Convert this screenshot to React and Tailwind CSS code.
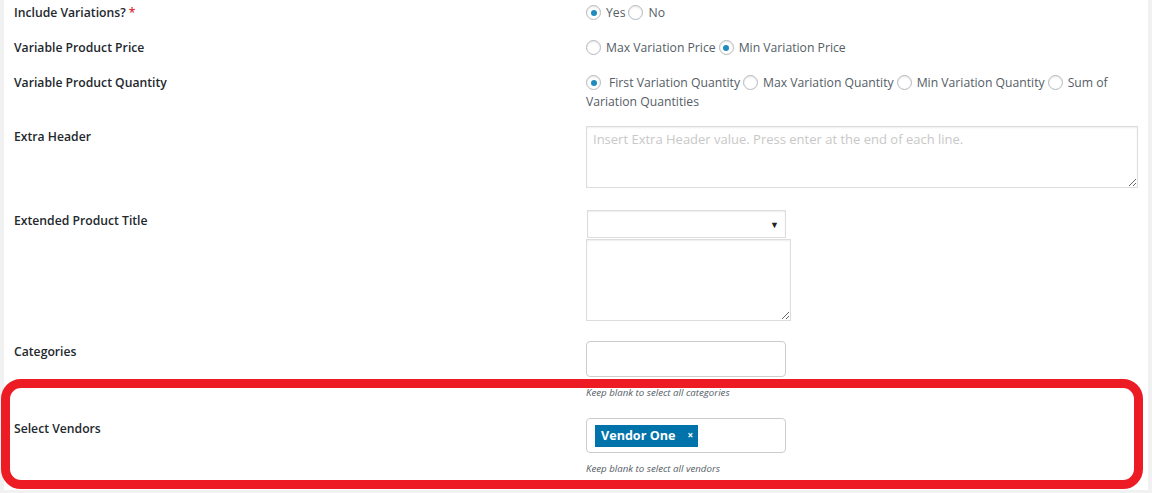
import React from "react";

function Circle({ checked, className = "" }) {
  return (
    <span
      className={
        "relative inline-block h-[15px] w-[15px] rounded-full border border-[#b4b9be] bg-white align-[-3px] shadow-[inset_0_1px_2px_rgba(0,0,0,0.1)] " +
        className
      }
    >
      {checked && (
        <span className="absolute left-[3.5px] top-[3.5px] h-[6px] w-[6px] rounded-full bg-[#1e8cbe]" />
      )}
    </span>
  );
}

function Row({ label, children, className = "", required }) {
  return (
    <div className={"flex items-start " + className}>
      <div className="w-[582px] shrink-0 pl-[10px] pt-[1px] font-semibold text-[#23282d] leading-[19px]">
        {label}
        {required && <span className="text-[#dc3232]"> *</span>}
      </div>
      <div className="min-w-0 flex-1 leading-[19px]">{children}</div>
    </div>
  );
}

export default function App() {
  return (
    <div
      className="relative h-[493px] w-full bg-[#f1f1f1] px-[4px] pb-[3px] text-[12.2px]"
      style={{ fontFamily: '"Open Sans", "Noto Sans", sans-serif' }}
    >
      <div className="flex h-full flex-col bg-white pt-[2px]">
        <Row label="Include Variations?" required>
          <div className="h-[20px] pt-[1px] text-[#555d66]">
            <Circle checked />
            <span className="ml-[5px]">Yes</span>
            <Circle className="ml-[3px]" />
            <span className="ml-[5px]">No</span>
          </div>
        </Row>
        <Row label="Variable Product Price" className="mt-[15px]">
          <div className="h-[20px] pt-[1px] text-[#555d66]">
            <Circle />
            <span className="ml-[5px]">Max Variation Price</span>
            <Circle checked className="ml-[3px]" />
            <span className="ml-[5px]">Min Variation Price</span>
          </div>
        </Row>
        <Row label="Variable Product Quantity" className="mt-[15px]">
          <div className="h-[39px] pt-[1px] text-[#555d66]">
            <Circle checked />
            <span className="ml-[8px]">First Variation Quantity</span>
            <Circle className="ml-[3px]" />
            <span className="ml-[5px]">Max Variation Quantity</span>
            <Circle className="ml-[3px]" />
            <span className="ml-[5px]">Min Variation Quantity</span>
            <Circle className="ml-[3px]" />
            <span className="ml-[5px]">Sum of</span>
            <br />
            <span>Variation Quantities</span>
          </div>
        </Row>
        <Row label="Extra Header" className="mt-[15px]">
          <textarea
            className="block h-[62px] w-[552px] resize border border-[#dddddd] px-[6px] py-[2px] text-[13px] leading-[20px] text-[#32373c] shadow-[inset_0_1px_2px_rgba(0,0,0,0.07)] outline-none placeholder:text-[#c8c8c8]"
            placeholder="Insert Extra Header value. Press enter at the end of each line."
          />
        </Row>
        <Row label="Extended Product Title" className="mt-[22px]">
          <div className="ml-[1px] flex h-[28px] w-[199px] items-center justify-end border border-[#dddddd] pr-[6px] shadow-[inset_0_1px_2px_rgba(0,0,0,0.07)]">
            <span className="text-[9px] text-[#222]">▼</span>
          </div>
          <textarea className="mt-[1px] block h-[82px] w-[205px] resize border border-[#dddddd] shadow-[inset_0_1px_2px_rgba(0,0,0,0.07)] outline-none" />
        </Row>
        <Row label="Categories" className="mt-[20px]">
          <div className="h-[36px] w-[200px] rounded-[4px] border border-[#cccccc] bg-white" />
          <div className="mt-[9px] text-[9.7px] italic leading-[14px] text-[#555d66]">
            Keep blank to select all categories
          </div>
        </Row>
        <Row label="Select Vendors" className="mt-[18px]">
          <div className="flex h-[35px] w-[200px] items-center rounded-[4px] border border-[#cccccc] bg-white pl-[8px]">
            <span className="flex h-[22px] items-center bg-[#0073aa] pl-[6px] pr-[5px] text-[12.6px] font-bold text-white">
              Vendor One
              <span className="ml-[12px] text-[10px] font-bold">×</span>
            </span>
          </div>
          <div className="mt-[9px] text-[9.7px] italic leading-[14px] text-[#555d66]">
            Keep blank to select all vendors
          </div>
        </Row>
      </div>
      <div className="pointer-events-none absolute left-[1px] top-[379px] h-[110px] w-[1142px] rounded-[20px] border-[9px] border-[#ed1c24]" />
    </div>
  );
}
